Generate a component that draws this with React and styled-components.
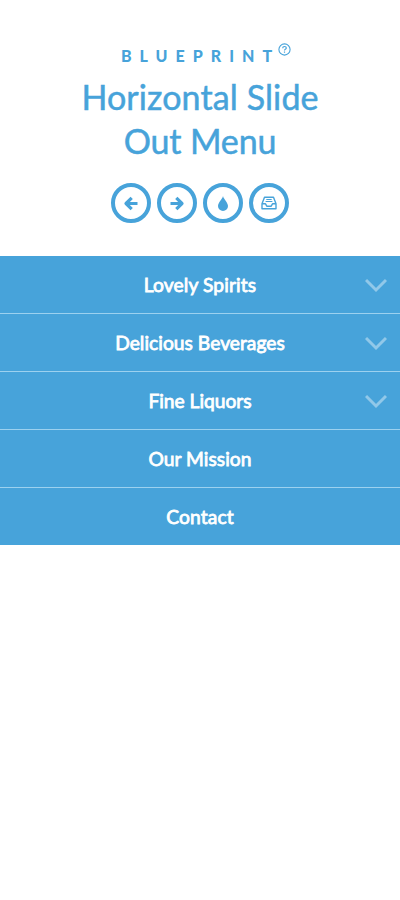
import React from "react";
import styled, { createGlobalStyle } from "styled-components";

const blue = "#47a3da";

const GlobalStyle = createGlobalStyle`
  *, *::before, *::after { box-sizing: border-box; }
  body { margin: 0; background: #fff; color: ${blue}; font-family: Lato, sans-serif; }
`;
const Header = styled.header`
  height: 256px;
  padding-top: 46px;
  text-align: center;
`;
const Kicker = styled.div`
  position: relative;
  width: max-content;
  margin: 0 auto;
  padding-left: 1px;
  font-size: 16px;
  line-height: 20px;
  font-weight: 900;
  letter-spacing: 8px;
`;
const Help = styled.svg`
  position: absolute;
  left: 158px;
  top: -3px;
`;
const Title = styled.h1`
  margin: 9px auto 0;
  height: 88px;
  font-size: 34px;
  line-height: 44px;
  font-weight: 400;
  -webkit-text-stroke: 0.5px ${blue};
`;
const TitleLine = styled.span`
  display: block;
  letter-spacing: ${(p) => p.$tracking}px;
`;
const Nav = styled.nav`
  display: flex;
  justify-content: center;
  gap: 6px;
  margin-top: 20px;
`;
const RoundLink = styled.a`
  width: 40px;
  height: 40px;
  border: 4px solid ${blue};
  border-radius: 50%;
  display: grid;
  place-items: center;
`;
const Menu = styled.ul`
  list-style: none;
  margin: 0;
  padding: 0;
  background: ${blue};
`;
const Item = styled.li`
  position: relative;
  height: ${(p) => (p.$first ? 57 : 58)}px;
  border-top: ${(p) => (p.$first ? "0" : "1px solid #9cd1ef")};
  display: grid;
  place-items: center;
  color: #fff;
  font-size: 19.2px;
  font-weight: 400;
  letter-spacing: ${(p) => p.$tracking}px;
  -webkit-text-stroke: 0.8px #fff;
`;
const Chevron = styled.svg`
  position: absolute;
  right: 13px;
  top: 22px;
`;
const items = [
  { label: "Lovely Spirits", sub: true, tracking: 0.12 },
  { label: "Delicious Beverages", sub: true, tracking: 0.04 },
  { label: "Fine Liquors", sub: true, tracking: 0 },
  { label: "Our Mission", sub: false, tracking: 0.04 },
  { label: "Contact", sub: false, tracking: 0.12 },
];

export default function App() {
  return (
    <>
      <GlobalStyle />
      <Header>
        <Kicker>BLUEPRINT
          <Help width="13" height="13" viewBox="0 0 13 13" fill="none" stroke={blue}>
            <circle cx="6.5" cy="6.5" r="5.6" strokeWidth="1.1" />
            <path d="M4.7 5.2q0-1.700 1.800-1.700t1.800 1.500q0 .8-.9 1.200-.9.4-.9 1.200M6.500 8.400v1.300" strokeWidth="1.200" />
          </Help>
        </Kicker>
        <Title>
          <TitleLine $tracking={0.11}>Horizontal Slide </TitleLine>
          <TitleLine $tracking={-0.15}>Out Menu</TitleLine>
        </Title>
        <Nav>
          <RoundLink><svg width="16" height="16" viewBox="0 0 16 16" fill="none" stroke={blue} strokeWidth="3.2" strokeLinejoin="round"><path d="M14.5 8.500H4M8.700 2.800L3 8.500l5.700 5.700" /></svg></RoundLink>
          <RoundLink><svg width="16" height="16" viewBox="0 0 16 16" fill="none" stroke={blue} strokeWidth="3.2" strokeLinejoin="round"><path d="M1.5 8.500H12M7.300 2.800L13 8.500l-5.700 5.700" /></svg></RoundLink>
          <RoundLink><svg width="16" height="16" viewBox="0 0 16 16" fill={blue}><path d="M8 1C7.500 4 3 7.500 3 11a5 5 0 0 0 10 0C13 7.500 8.500 4 8 1z" /></svg></RoundLink>
          <RoundLink><svg width="16" height="16" viewBox="0 0 16 16" fill="none" stroke={blue} strokeWidth="1.400" strokeLinejoin="round"><path d="M1 8.800L3.500 2.200h9L15 8.800v5H1zM1 8.800h3.500l1.300 2.400h4.400l1.300-2.400H15" /><path d="M5.300 4.500h5.400M4.600 6.500h6.800" strokeWidth="1" /></svg></RoundLink>
        </Nav>
      </Header>
      <Menu>
        {items.map(({ label, sub, tracking }, i) => (
          <Item key={label} $first={i === 0} $tracking={tracking}>
            {label}
            {sub && <Chevron width="22" height="15" viewBox="0 0 22 15" fill="none" stroke="#91c8e9" strokeWidth="3"><path d="M1 2l10 10L21 2" /></Chevron>}
          </Item>
        ))}
      </Menu>
    </>
  );
}
